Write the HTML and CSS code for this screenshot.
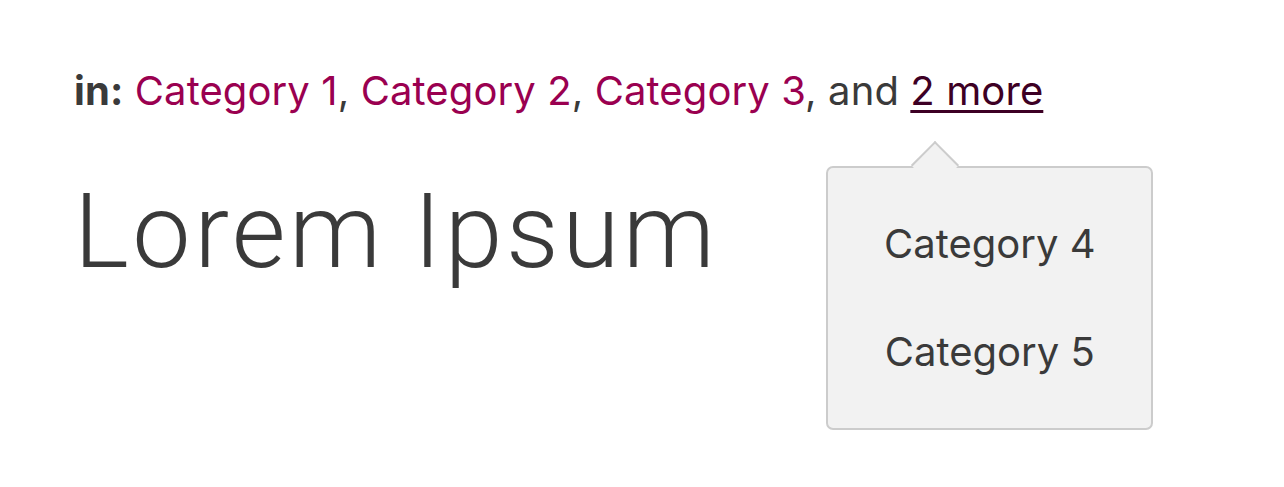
FILE: index.html
```html
<!DOCTYPE html>
<html lang="en">
<head>
<meta charset="utf-8">
<title>Lorem Ipsum</title>
<link rel="stylesheet" href="styles.css">
</head>
<body>
<main class="page">
  <div class="cats"><strong class="label">in:</strong> <a class="cat" href="#">Category 1</a>, <a class="cat" href="#">Category 2</a>, <a class="cat" href="#">Category 3</a>, and <span class="more-wrap"><a class="more" href="#">2 more</a><span class="popover"><span class="arrow"></span><span class="pop-list"><span class="pop-item">Category 4</span><span class="pop-item">Category 5</span></span></span></span></div>
  <h1 class="title">Lorem Ipsum</h1>
</main>
</body>
</html>
```
FILE: styles.css
```css
html, body {
  margin: 0;
  padding: 0;
  background: #ffffff;
}
.page {
  min-height: 487px;
  box-sizing: border-box;
  padding: 67px 0 0 74px;
  color: #3a3a3a;
  font-family: Inter, "Liberation Sans", sans-serif;
}
.cats {
  font-size: 40px;
  line-height: 48px;
  letter-spacing: 0.1px;
  white-space: nowrap;
}
.label {
  font-weight: 700;
}
.cat {
  color: #9a0050;
  text-decoration: none;
}
.more-wrap {
  position: relative;
}
.more {
  color: #3d0024;
  text-decoration: underline;
  text-decoration-thickness: 2.5px;
  text-underline-offset: 5px;
}
.popover {
  position: absolute;
  left: -84px;
  top: 100px;
  width: 327px;
  box-sizing: border-box;
  background: #f2f2f2;
  border: 2px solid #cccccc;
  border-radius: 7px;
  z-index: 2;
  display: block;
  letter-spacing: 0;
}
.arrow {
  position: absolute;
  left: 90px;
  top: -20px;
  width: 34px;
  height: 34px;
  box-sizing: border-box;
  background: #f2f2f2;
  border-top: 2px solid #cccccc;
  border-left: 2px solid #cccccc;
  transform: rotate(45deg);
}
.pop-list {
  position: relative;
  display: flex;
  flex-direction: column;
  align-items: center;
  gap: 60px;
  padding: 52px 0 52px;
}
.pop-item {
  display: block;
  font-size: 40px;
  line-height: 48px;
  color: #3a3a3a;
}
.title {
  margin: 56px 0 0;
  font-family: Roboto, "Liberation Sans", sans-serif;
  font-weight: 300;
  font-size: 104px;
  line-height: 122px;
  letter-spacing: 3.5px;
  color: #3a3a3a;
}
```
